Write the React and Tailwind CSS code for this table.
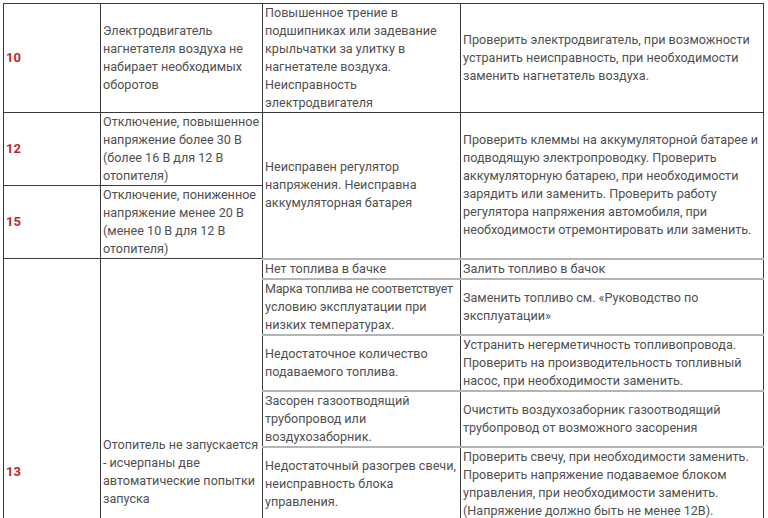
const cell = "border border-[#3a3a3a] px-[2px] align-middle";
const sub = "border-x border-[#3a3a3a] border-y-2 border-y-[#b5b5b5] px-[2px] align-middle";

function Num({ children }) {
  return <span className="text-[13px] font-bold text-[#c0272d]">{children}</span>;
}

export default function App() {
  return (
    <div className="h-[518px] overflow-hidden bg-white pl-[3px] pt-[3px] font-['Roboto',sans-serif] text-[12.6px] leading-[18px] text-[#505050]">
      <table className="w-[761px] table-fixed border-collapse">
        <colgroup>
          <col className="w-[97px]" />
          <col className="w-[162px]" />
          <col className="w-[198px]" />
          <col className="w-[303px]" />
        </colgroup>
        <tbody>
          <tr className="h-[109px]">
            <td className={cell}><Num>10</Num></td>
            <td className={cell}>
              Электродвигатель нагнетателя воздуха не набирает необходимых оборотов
            </td>
            <td className={cell}>
              Повышенное трение в подшипниках или задевание крыльчатки за улитку в нагнетателе воздуха. Неисправность электродвигателя
            </td>
            <td className={cell}>
              Проверить электродвигатель, при возможности устранить неисправность, при необходимости заменить нагнетатель воздуха.
            </td>
          </tr>
          <tr className="h-[72px]">
            <td className={cell}><Num>12</Num></td>
            <td className={cell}>
              Отключение, повышенное напряжение более 30 В (более 16 В для 12 В отопителя)
            </td>
            <td className={cell} rowSpan={2}>
              Неисправен регулятор напряжения. Неисправна аккумуляторная батарея
            </td>
            <td className={cell} rowSpan={2}>
              Проверить клеммы на аккумуляторной батарее и подводящую электропроводку. Проверить аккумуляторную батарею, при необходимости зарядить или заменить. Проверить работу регулятора напряжения автомобиля, при необходимости отремонтировать или заменить.
            </td>
          </tr>
          <tr className="h-[73px]">
            <td className={cell}><Num>15</Num></td>
            <td className={cell}>
              Отключение, пониженное напряжение менее 20 В (менее 10 В для 12 В отопителя)
            </td>
          </tr>
          <tr className="h-[20px]">
            <td className={cell} rowSpan={6}><Num>13</Num></td>
            <td className={cell} rowSpan={6}>
              Отопитель не запускается - исчерпаны две автоматические попытки запуска
            </td>
            <td className={sub}>Нет топлива в бачке</td>
            <td className={sub}>Залить топливо в бачок</td>
          </tr>
          <tr className="h-[53px]">
            <td className={sub}>
              <span className="whitespace-nowrap tracking-[-0.25px]">Марка топлива не соответствует</span>{" "}
              условию эксплуатации при низких температурах.
            </td>
            <td className={sub}>
              Заменить топливо см. «Руководство по эксплуатации»
            </td>
          </tr>
          <tr className="h-[55px]">
            <td className={sub}>Недостаточное количество подаваемого топлива.</td>
            <td className={sub}>
              Устранить негерметичность топливопровода. Проверить на производительность топливный насос, при необходимости заменить.
            </td>
          </tr>
          <tr className="h-[55px]">
            <td className={sub}>Засорен газоотводящий трубопровод или воздухозаборник.</td>
            <td className={sub}>
              Очистить воздухозаборник газоотводящий трубопровод от возможного засорения
            </td>
          </tr>
          <tr className="h-[73px]">
            <td className={sub}>
              Недостаточный разогрев свечи, неисправность блока управления.
            </td>
            <td className={sub}>
              Проверить свечу, при необходимости заменить. Проверить напряжение подаваемое блоком управления, при необходимости заменить. (Напряжение должно быть не менее 12В).
            </td>
          </tr>
          <tr className="h-[164px]">
            <td className={sub}></td>
            <td className={sub}></td>
          </tr>
        </tbody>
      </table>
    </div>
  );
}
